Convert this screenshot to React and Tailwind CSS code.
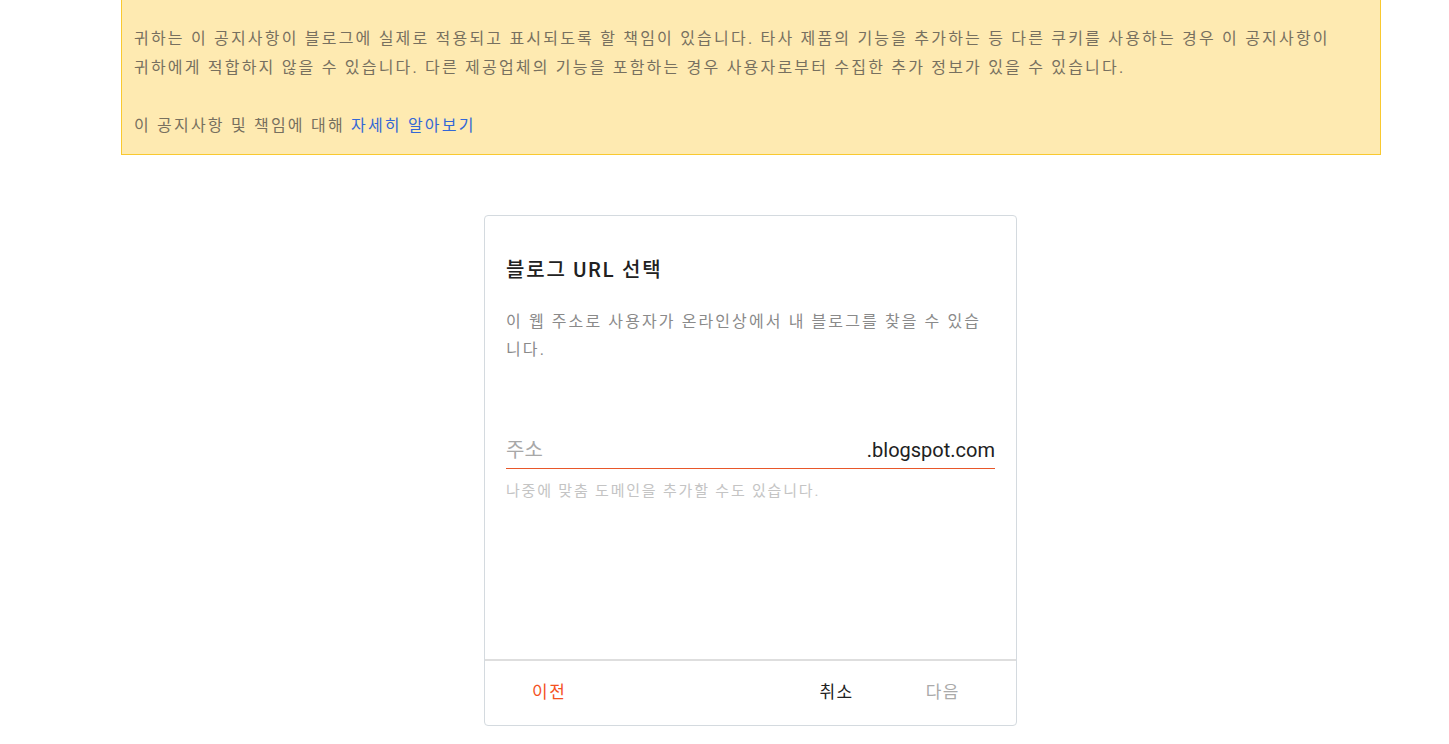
import React from 'react';

const FONT = "font-['Roboto','Noto_Sans_CJK_KR',sans-serif]";

const Notice = () => (
  <div className="ml-[121px] w-[1260px] border-x border-b border-[#f9c92f] bg-[#feeab1] px-[12px] pt-[24px] pb-[14px] text-[16px] leading-[29px] tracking-[2.2px] text-[#77705f]">
    <p className="whitespace-nowrap">
      귀하는 이 공지사항이 블로그에 실제로 적용되고 표시되도록 할 책임이 있습니다. 타사 제품의 기능을 추가하는 등 다른 쿠키를 사용하는 경우 이 공지사항이
      <br />
      귀하에게 적합하지 않을 수 있습니다. 다른 제공업체의 기능을 포함하는 경우 사용자로부터 수집한 추가 정보가 있을 수 있습니다.
    </p>
    <p className="mt-[29px]">
      이 공지사항 및 책임에 대해 <a href="#" className="text-[#3367d6]">자세히 알아보기</a>
    </p>
  </div>
);

const UrlCard = () => (
  <div className="ml-[484px] mt-[60px] flex h-[511px] w-[533px] flex-col rounded-[4px] border border-[#d4dadf] bg-white">
    <div className="flex-1 px-[21px] pt-[40px]">
      <h2 className="text-[20px] leading-[28px] font-medium tracking-[1.8px] text-[#212121]">블로그 URL 선택</h2>
      <p className="mt-[24px] whitespace-nowrap text-[16px] leading-[28px] tracking-[2.1px] text-[#8a8a8a]">
        이 웹 주소로 사용자가 온라인상에서 내 블로그를 찾을 수 있습
        <br />
        니다.
      </p>
      <div className="mt-[72px] flex items-end justify-between border-b border-[#e8572a] pb-[4px]">
        <span className="text-[20px] leading-[28px] text-[#a8a8a8]">주소</span>
        <span className="text-[20px] leading-[28px] text-[#212121]">.blogspot.com</span>
      </div>
      <p className="mt-[12px] text-[15px] leading-[20px] tracking-[1.8px] text-[#c4c4c4]">
        나중에 맞춤 도메인을 추가할 수도 있습니다.
      </p>
    </div>
    <div className="flex h-[66px] items-center border-t-2 border-[#dedede] pl-[23px] pr-[22px] text-[17px] tracking-[1.5px]">
      <button className="px-[24px] py-[8px] text-[#f4511e]">이전</button>
      <div className="flex-1" />
      <button className="px-[36px] py-[8px] text-[#212121]">취소</button>
      <button className="pl-[36px] pr-[34px] py-[8px] text-[#aaaaaa]">다음</button>
    </div>
  </div>
);

const App = () => {
  return (
    <div className={`min-h-screen bg-white ${FONT}`}>
      <Notice />
      <UrlCard />
    </div>
  );
};

export default App;
